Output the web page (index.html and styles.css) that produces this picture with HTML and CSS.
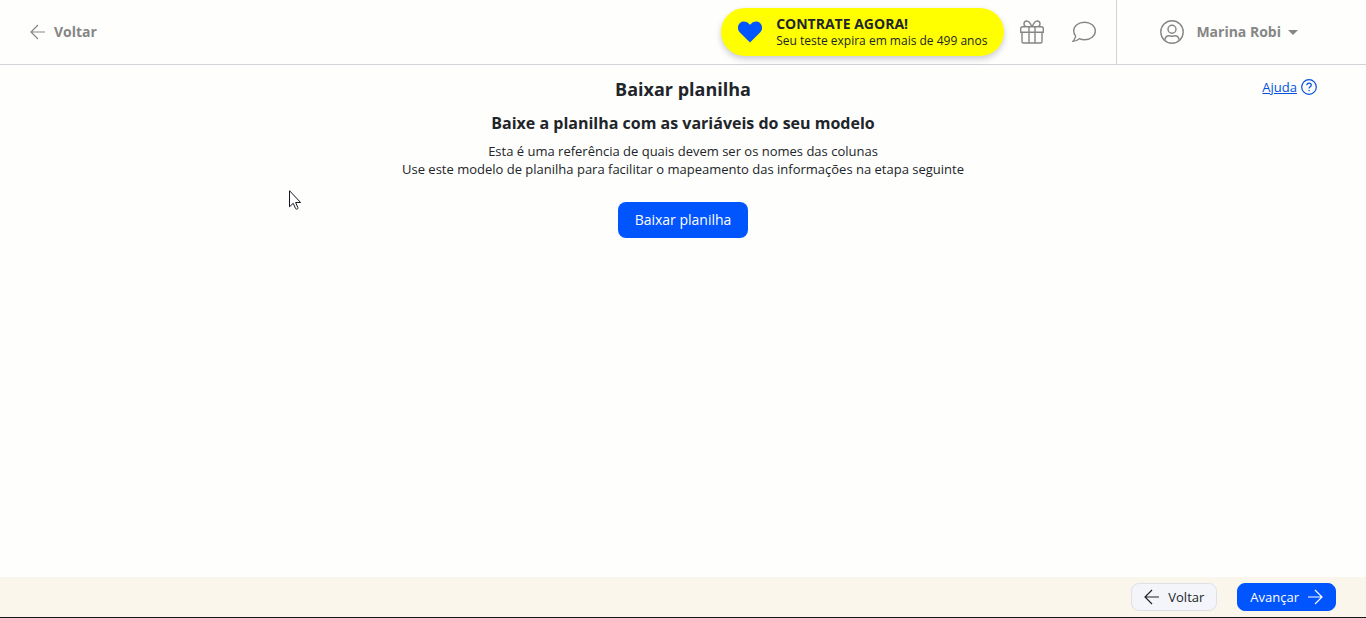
FILE: index.html
```html
<!DOCTYPE html>
<html lang="pt-BR">
<head>
    <meta charset="UTF-8">
    <meta name="viewport" content="width=device-width, initial-scale=1.0">
    <title>Baixar planilha</title>
    <link rel="stylesheet" href="styles.css">
</head>
<body>
    <header class="topbar">
        <a class="back-link" href="#">
            <svg class="icon-arrow" viewBox="0 0 16 16"><path d="M15 8H1.500M8 1L1 8l7 7"/></svg>
            Voltar
        </a>
        <div class="topbar-actions">
            <button class="trial-button" type="button">
                <svg class="icon-heart" viewBox="0 0 24 22"><path d="M12 21.500L1.900 11.500C-.8 8.700-.6 4.200 2.200 1.800 4.700-.3 8.300.1 10.600 2.400L12 3.800l1.400-1.400C15.700.1 19.300-.3 21.800 1.800c2.800 2.400 3 6.900.3 9.700z"/></svg>
                <span class="trial-text">
                    <strong>CONTRATE AGORA!</strong>
                    <span>Seu teste expira em mais de 499 anos</span>
                </span>
            </button>
            <button class="icon-button" type="button" aria-label="Novidades">
                <svg viewBox="0 0 24 24"><path d="M2.500 6.700h19a1.800 1.800 0 0 1 1.800 1.800v3.800H.7V8.500a1.800 1.800 0 0 1 1.800-1.800zM2 12.300v9.200c0 .8.600 1.500 1.500 1.500h17c.9 0 1.500-.7 1.500-1.500v-9.200M9 6.700V23M15 6.700V23M12 6.700C10.500 3.500 9 1 6.800 1 5.200 1 4 2.200 4 3.800s1 2.900 2.700 2.900M12 6.700C13.500 3.500 15 1 17.200 1 18.800 1 20 2.200 20 3.800s-1 2.900-2.700 2.900"/></svg>
            </button>
            <button class="icon-button" type="button" aria-label="Mensagens">
                <svg viewBox="0 0 24 24"><path d="M12.500 2.200c6.200 0 10.800 3.900 10.800 8.800s-4.600 8.800-10.800 8.800c-1.900 0-3.700-.4-5.200-1.100-1.600 1.400-3.700 2.700-6.500 2.700 1.500-1.500 2.500-3.200 2.900-5.200C2.400 14.700 1.700 12.900 1.700 11c0-4.900 4.600-8.800 10.800-8.800z"/></svg>
            </button>
        </div>
        <button class="user-menu" type="button">
            <svg class="icon-user" viewBox="0 0 24 24"><circle cx="12" cy="12" r="11.200"/><circle cx="12" cy="9.300" r="4"/><path d="M4.800 20.300c.3-3 2-4.500 4.400-4.500 1 0 1.500.5 2.800.5s1.800-.5 2.800-.5c2.400 0 4.100 1.500 4.400 4.500"/></svg>
            Marina Robi
            <span class="caret"></span>
        </button>
    </header>

    <main class="content">
        <div class="help">
            <a href="#">Ajuda</a>
            <svg class="icon-help" viewBox="0 0 16 16"><circle cx="8" cy="8" r="7.300"/><path d="M5.800 6.300c0-1.300.9-2.200 2.200-2.200s2.300.8 2.300 2c0 1.700-2.200 1.700-2.200 3.300M8.100 10.900v1.400"/></svg>
        </div>
        <h1>Baixar planilha</h1>
        <h2>Baixe a planilha com as variáveis do seu modelo</h2>
        <p>Esta é uma referência de quais devem ser os nomes das colunas<br>Use este modelo de planilha para facilitar o mapeamento das informações na etapa seguinte</p>
        <button class="download-button" type="button">Baixar planilha</button>
    </main>

    <footer class="bottombar">
        <button class="step-button step-back" type="button">
            <svg class="icon-arrow" viewBox="0 0 16 16"><path d="M15 8H1.500M8 1L1 8l7 7"/></svg>
            Voltar
        </button>
        <button class="step-button step-next" type="button">
            Avançar
            <svg class="icon-arrow" viewBox="0 0 16 16"><path d="M1 8h13.500M8 1l7 7-7 7"/></svg>
        </button>
    </footer>

    <svg class="cursor" viewBox="0 0 12 20"><path d="M.5.700v16.100l3.700-3.500 2.300 5.100c.3.700 1 .9 1.700.6.700-.3.900-.9.600-1.600L6.600 12.500h5z"/></svg>
</body>
</html>
```
FILE: styles.css
```css
* {
    box-sizing: border-box;
}
body {
    margin: 0;
    min-height: 100vh;
    display: flex;
    flex-direction: column;
    font-family: "Open Sans", "Noto Sans", sans-serif;
    font-size: 13px;
    line-height: 18px;
    color: #212529;
    background: #fefefd;
}
button {
    font: inherit;
    color: inherit;
    border: none;
    background: none;
    padding: 0;
    cursor: pointer;
}
svg {
    display: block;
    flex: none;
    fill: none;
    stroke: currentColor;
}
.topbar {
    display: flex;
    align-items: center;
    height: 65px;
    padding-left: 30px;
    border-bottom: 1px solid #d2d3d6;
    color: #868686;
}
.back-link {
    display: flex;
    align-items: center;
    gap: 8px;
    font-size: 14px;
    font-weight: 700;
    color: inherit;
    text-decoration: none;
}
.icon-arrow {
    width: 16px;
    height: 16px;
    stroke-width: 1.2;
}
.topbar-actions {
    display: flex;
    align-items: center;
    margin-left: auto;
    padding-right: 20px;
    gap: 28px;
}
.trial-button {
    display: flex;
    align-items: center;
    gap: 14px;
    height: 48px;
    padding: 0 17px;
    margin-right: -12px;
    border-radius: 24px;
    background: #ffff00;
    color: #212529;
    text-align: left;
    box-shadow: 0 3px 6px rgba(0, 0, 40, 0.2);
}
.icon-heart {
    width: 24px;
    height: 22px;
    fill: #0055ff;
    stroke: none;
}
.trial-text {
    display: flex;
    flex-direction: column;
    font-size: 12px;
    line-height: 16px;
}
.trial-text strong {
    font-size: 14px;
    line-height: 18px;
}
.icon-button svg,
.icon-user {
    width: 24px;
    height: 24px;
    stroke-width: 1.4;
}
.user-menu {
    display: flex;
    align-items: center;
    align-self: stretch;
    gap: 12px;
    padding: 0 68px 0 43px;
    border-left: 1px solid #d2d3d6;
    font-size: 14px;
    font-weight: 700;
}
.caret {
    margin-left: -5px;
    border: 5px solid transparent;
    border-top-color: currentColor;
    border-bottom: none;
}
.content {
    position: relative;
    flex: 1;
    display: flex;
    flex-direction: column;
    align-items: center;
    padding: 12px 20px;
    text-align: center;
}
.help {
    position: absolute;
    top: 13px;
    right: 49px;
    display: flex;
    align-items: center;
    gap: 4px;
    color: #0050dc;
}
.help a {
    color: inherit;
}
.icon-help {
    width: 16px;
    height: 16px;
    stroke-width: 1.2;
}
h1 {
    margin: 0 0 10px;
    font-size: 18px;
    font-weight: 700;
    line-height: 24px;
}
h2 {
    margin: 0 0 7px;
    font-size: 16px;
    font-weight: 700;
    line-height: 24px;
}
p {
    margin: 0 0 24px;
}
.download-button {
    height: 36px;
    padding: 0 17px;
    border-radius: 8px;
    background: #0055ff;
    color: #fff;
    font-size: 14px;
}
.bottombar {
    display: flex;
    justify-content: flex-end;
    align-items: center;
    gap: 20px;
    height: 41px;
    padding-right: 30px;
    background: #faf6ec;
    border-bottom: 1px solid #16141c;
}
.step-button {
    display: flex;
    align-items: center;
    gap: 8px;
    height: 28px;
    padding: 0 12px;
    border: 1px solid #dfe1e8;
    border-radius: 8px;
}
.step-back {
    background: #f3f5fa;
}
.step-next {
    border-color: #0055ff;
    background: #0055ff;
    color: #fff;
}
/* mouse pointer floating over the page */
.cursor {
    position: absolute;
    top: 190px;
    left: 289px;
    width: 12px;
    height: 20px;
    fill: #fff;
    stroke: #15151f;
}
```
